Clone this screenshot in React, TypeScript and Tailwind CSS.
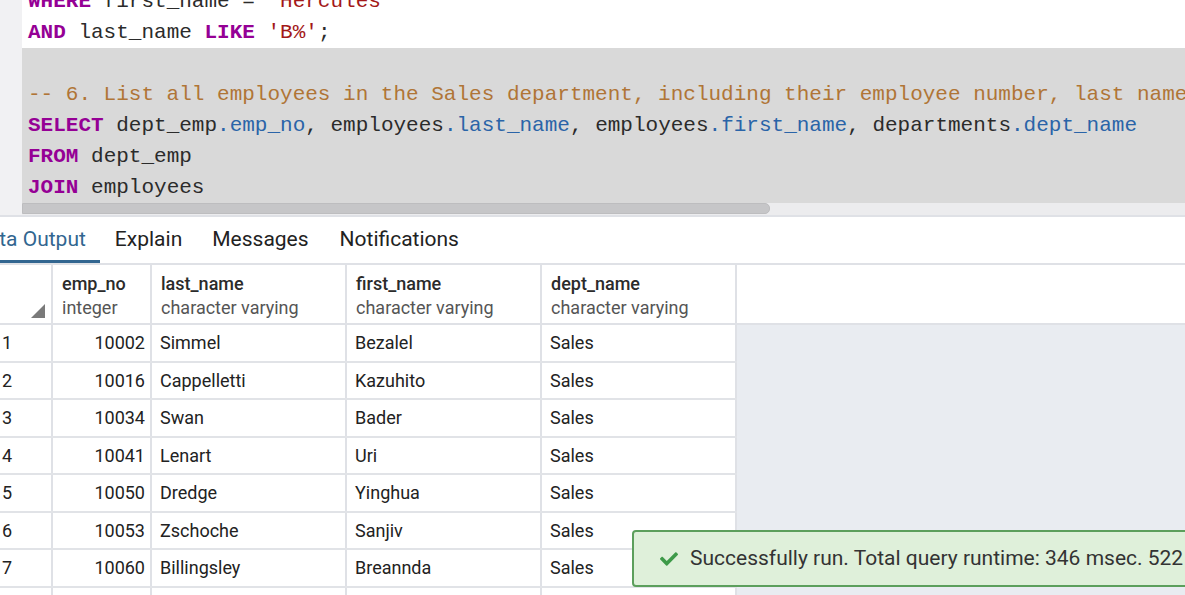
type Tok = { t: string; c?: 'kw' | 'str' | 'com' | 'prop' };

const codeLines: { toks: Tok[]; hl?: boolean }[] = [
  { toks: [{ t: 'WHERE', c: 'kw' }, { t: ' first_name = ' }, { t: "'Hercules'", c: 'str' }] },
  { toks: [{ t: 'AND', c: 'kw' }, { t: ' last_name ' }, { t: 'LIKE', c: 'kw' }, { t: ' ' }, { t: "'B%'", c: 'str' }, { t: ';' }] },
  { toks: [{ t: ' ' }], hl: true },
  {
    toks: [{ t: '-- 6. List all employees in the Sales department, including their employee number, last name, first name, and department name.', c: 'com' }],
    hl: true,
  },
  {
    toks: [
      { t: 'SELECT', c: 'kw' },
      { t: ' dept_emp' },
      { t: '.emp_no', c: 'prop' },
      { t: ', employees' },
      { t: '.last_name', c: 'prop' },
      { t: ', employees' },
      { t: '.first_name', c: 'prop' },
      { t: ', departments' },
      { t: '.dept_name', c: 'prop' },
    ],
    hl: true,
  },
  { toks: [{ t: 'FROM', c: 'kw' }, { t: ' dept_emp' }], hl: true },
  { toks: [{ t: 'JOIN', c: 'kw' }, { t: ' employees' }], hl: true },
];

const tokClass = (c?: Tok['c']) => {
  if (c === 'kw') return 'text-[#950095] font-bold';
  if (c === 'str') return 'text-[#a31818]';
  if (c === 'com') return 'text-[#b07536]';
  if (c === 'prop') return 'text-[#2a64a8]';
  return 'text-[#2b2b2b]';
};

const rows = [
  ['1', '10002', 'Simmel', 'Bezalel', 'Sales'],
  ['2', '10016', 'Cappelletti', 'Kazuhito', 'Sales'],
  ['3', '10034', 'Swan', 'Bader', 'Sales'],
  ['4', '10041', 'Lenart', 'Uri', 'Sales'],
  ['5', '10050', 'Dredge', 'Yinghua', 'Sales'],
  ['6', '10053', 'Zschoche', 'Sanjiv', 'Sales'],
  ['7', '10060', 'Billingsley', 'Breannda', 'Sales'],
  ['8', '10061', 'Tokunaga', 'Kenroku', 'Sales'],
];

const columns = [
  { name: 'emp_no', type: 'integer', w: 'w-[99px]' },
  { name: 'last_name', type: 'character varying', w: 'w-[195px]' },
  { name: 'first_name', type: 'character varying', w: 'w-[195px]' },
  { name: 'dept_name', type: 'character varying', w: 'w-[195px]' },
];

const CheckIcon = () => (
  <svg viewBox="0 0 512 512" className="w-[18px] h-[18px] shrink-0" fill="#3d9a48">
    <path d="M173.898 439.404l-166.4-166.4c-9.997-9.997-9.997-26.206 0-36.204l36.203-36.204c9.997-9.998 26.207-9.998 36.204 0L192 312.69 432.095 72.596c9.997-9.997 26.207-9.997 36.204 0l36.203 36.204c9.997 9.997 9.997 26.206 0 36.204l-294.4 294.401c-9.998 9.997-26.207 9.997-36.204-.001z" />
  </svg>
);

const App = () => {
  return (
    <div className="relative w-[1185px] h-[595px] overflow-hidden bg-white font-['Roboto',sans-serif]">
      {/* editor */}
      <div className="flex h-[215px] bg-[#f1f1f3]">
        <div className="w-[22px] shrink-0 bg-[#f1f1f3]" />
        <div className="flex-1 flex flex-col bg-white overflow-hidden">
          <div className="mt-[-14.5px] font-['Liberation_Mono',monospace] text-[21px] whitespace-pre">
            {codeLines.map((line, i) => (
              <div
                key={i}
                className={`h-[31px] leading-[31px] pl-[6px] ${line.hl ? 'bg-[#d9d9d9]' : ''}`}
              >
                {line.toks.map((tok, j) => (
                  <span key={j} className={tokClass(tok.c)}>
                    {tok.t}
                  </span>
                ))}
              </div>
            ))}
          </div>
          <div className="mt-auto h-[13px] bg-[#ececee] flex items-center">
            <div className="h-[11px] w-[748px] rounded-r-[5px] bg-[#c6c6c8] border border-[#bdbdbf]" />
          </div>
        </div>
      </div>

      {/* tabs */}
      <div className="flex h-[50px] border-t-2 border-b-2 border-[#dfe1e6] text-[21px]">
        <div className="relative flex items-center pr-[14px] text-[#326690] overflow-hidden">
          <span className="ml-[-26px]">Data Output</span>
          <div className="absolute left-0 right-0 bottom-[-1px] h-[4px] bg-[#326690]" />
        </div>
        <div className="flex items-center px-[15px] text-[#222]">Explain</div>
        <div className="flex items-center px-[15px] text-[#222]">Messages</div>
        <div className="flex items-center px-[16px] text-[#222]">Notifications</div>
      </div>

      {/* grid */}
      <div className="flex">
        <div className="flex flex-col">
          <div className="flex h-[60px] border-b-2 border-[#dfe1e6]">
            <div className="relative w-[53px] border-r-2 border-[#dfe1e6]">
              <div className="absolute right-[6px] bottom-[5px] w-0 h-0 border-l-[14px] border-l-transparent border-b-[14px] border-b-[#7a7a7a]" />
            </div>
            {columns.map((c) => (
              <div key={c.name} className={`${c.w} border-r-2 border-[#dfe1e6] pl-[9px] pt-[7px]`}>
                <div className="text-[18px] leading-[24px] font-medium text-[#2b2b2b]">{c.name}</div>
                <div className="text-[18px] leading-[24px] text-[#555]">{c.type}</div>
              </div>
            ))}
          </div>
          {rows.map((r) => (
            <div key={r[0]} className="flex h-[37.5px] border-b-2 border-[#e1e3e7] text-[18px] text-[#222]">
              <div className="w-[53px] border-r-2 border-[#dfe1e6] flex items-center pl-[2px]">{r[0]}</div>
              <div className="w-[99px] border-r-2 border-[#dfe1e6] flex items-center justify-end pr-[5px]">{r[1]}</div>
              <div className="w-[195px] border-r-2 border-[#dfe1e6] flex items-center pl-[8px]">{r[2]}</div>
              <div className="w-[195px] border-r-2 border-[#dfe1e6] flex items-center pl-[8px]">{r[3]}</div>
              <div className="w-[195px] border-r-2 border-[#dfe1e6] flex items-center pl-[8px]">{r[4]}</div>
            </div>
          ))}
        </div>
        <div className="flex-1 flex flex-col">
          <div className="h-[60px] bg-white border-b-2 border-[#dfe1e6]" />
          <div className="flex-1 bg-[#e9ecf1]" />
        </div>
      </div>

      {/* toast */}
      <div className="absolute left-[632px] top-[530px] w-[640px] h-[57px] rounded-[4px] border-2 border-[#5c9f5c] bg-[#dff0da] flex items-center pl-[26px]">
        <CheckIcon />
        <span className="ml-[12px] text-[21px] text-[#333] whitespace-nowrap">
          Successfully run. Total query runtime: 346 msec. 522 rows affected.
        </span>
      </div>
    </div>
  );
};

export default App;
